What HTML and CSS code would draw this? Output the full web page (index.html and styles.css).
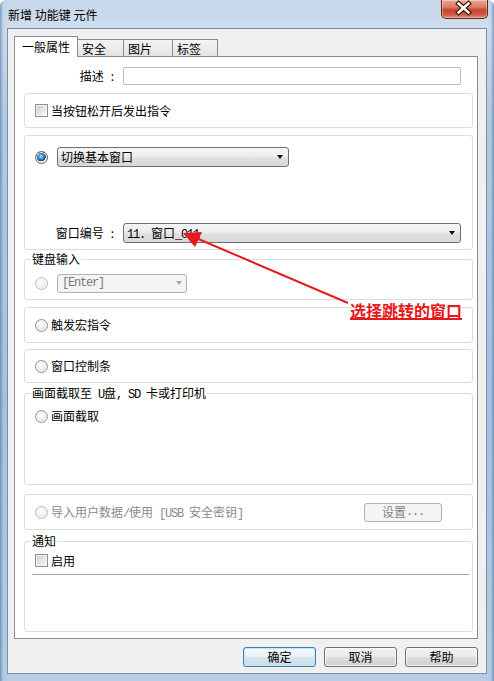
FILE: index.html
```html
<!DOCTYPE html>
<html lang="zh-CN">
<head>
<meta charset="utf-8">
<title>新增 功能键 元件</title>
<link rel="stylesheet" href="styles.css">
</head>
<body>
<div class="window">
  <div class="titlebar">
    <span class="title">新增 功能键 元件</span>
    <div class="close">
      <svg width="47" height="19" viewBox="0 0 47 19">
        <path d="M18 4.5 L28 13.5 M28 4.5 L18 13.5" stroke="#3b1209" stroke-width="5" stroke-linecap="square"/>
        <path d="M18 4.5 L28 13.5 M28 4.5 L18 13.5" stroke="#ffffff" stroke-width="2.6" stroke-linecap="square"/>
      </svg>
    </div>
  </div>
  <div class="client">
    <div class="tabs">
      <div class="tab active">一般属性</div>
      <div class="tab t2">安全</div>
      <div class="tab t3">图片</div>
      <div class="tab t4">标签</div>
    </div>
    <div class="panel">
      <div class="desc-row">
        <span class="lbl lbl-desc">描述<span class="colon">:</span></span>
        <div class="textbox"></div>
      </div>

      <div class="group g1">
        <span class="checkbox"></span><span class="opt">当按钮松开后发出指令</span>
      </div>

      <div class="group g2">
        <div class="row">
          <span class="radio on"></span>
          <div class="combo combo-main"><span class="ctext">切换基本窗口</span><span class="arrow"></span></div>
        </div>
        <div class="row row-win">
          <span class="lbl lbl-win">窗口编号<span class="colon">:</span></span>
          <div class="combo combo-win"><span class="ctext"><span class="mono">11. </span>窗口<span class="mono">_011</span></span><span class="arrow"></span></div>
        </div>
      </div>

      <fieldset class="fs fs-kb">
        <legend>键盘输入</legend>
        <div class="fs-body kb-body">
          <span class="radio dis"></span>
          <div class="combo combo-dis"><span class="ctext mono">[Enter]</span><span class="arrow"></span></div>
        </div>
      </fieldset>

      <div class="group g-macro">
        <span class="radio"></span><span class="opt">触发宏指令</span>
      </div>

      <div class="group g-wc">
        <span class="radio"></span><span class="opt">窗口控制条</span>
      </div>

      <fieldset class="fs fs-shot">
        <legend>画面截取至<span class="mono"> U</span>盘<span class="mono">, SD </span>卡或打印机</legend>
        <div class="fs-body shot-body">
          <span class="radio"></span><span class="opt">画面截取</span>
        </div>
      </fieldset>

      <div class="group g-usb">
        <span class="radio dis"></span><span class="opt dis-text">导入用户数据<span class="mono">/</span>使用<span class="mono"> [USB </span>安全密钥<span class="mono">]</span></span>
        <div class="btn btn-dis">设置<span class="mono">...</span></div>
      </div>

      <fieldset class="fs fs-notify">
        <legend>通知</legend>
        <div class="fs-body notify-body">
          <div class="check-row"><span class="checkbox"></span><span class="opt">启用</span></div>
          <div class="hline"></div>
        </div>
      </fieldset>
    </div>
    <div class="buttons">
      <div class="btn btn-default">确定</div>
      <div class="btn">取消</div>
      <div class="btn">帮助</div>
    </div>
  </div>

  <svg class="annot" width="494" height="681" viewBox="0 0 494 681">
    <line x1="348" y1="303" x2="196" y2="238" stroke="#e8191c" stroke-width="2"/>
    <polygon points="183,233 202,232 195,247" fill="#e8191c"/>
  </svg>
  <div class="annot-text">选择跳转的窗口</div>
</div>
</body>
</html>
```

FILE: styles.css
```css
* { box-sizing: border-box; }
html, body { margin: 0; padding: 0; }
body {
  width: 494px;
  height: 681px;
  overflow: hidden;
  font-family: "Noto Sans CJK SC", "Noto Sans", sans-serif;
  font-size: 12px;
  line-height: 14px;
  color: #000;
}
.mono {
  font-family: "Liberation Mono", "DejaVu Sans Mono", monospace;
  font-size: 12px;
  line-height: 10px;
  letter-spacing: -1.2px;
  white-space: pre;
}

.window {
  position: relative;
  width: 494px;
  height: 681px;
  display: flex;
  flex-direction: column;
  border-radius: 6px 6px 0 0;
  background:
    linear-gradient(90deg, rgba(60,100,150,0.55) 0, rgba(150,185,220,0.2) 3px, rgba(0,0,0,0) 7px, rgba(0,0,0,0) 487px, rgba(150,185,220,0.2) 491px, rgba(60,100,150,0.55) 494px),
    linear-gradient(180deg, #c5d6ea 0, #cfdeef 28px, #b4cae3 120px, #a8c1de 400px, #b7cce5 681px);
}

.titlebar {
  height: 28px;
  display: flex;
  align-items: flex-start;
  flex-shrink: 0;
}
.title {
  margin: 8px 0 0 8px;
  font-size: 12px;
  line-height: 14px;
  color: #000;
}
.close {
  margin-left: auto;
  margin-right: 6px;
  width: 47px;
  height: 19px;
  border: 1px solid #6b2418;
  border-top: none;
  border-radius: 0 0 5px 5px;
  background: linear-gradient(180deg, #eaa998 0, #dc7a62 40%, #c7432b 55%, #cf5a40 80%, #e08b70 100%);
  box-shadow: inset 0 0 0 1px rgba(255,255,255,0.35);
  display: flex;
}
.close svg { display: block; margin: -1px 0 0 -1px; }

.client {
  margin: 0 7px 7px 7px;
  height: 646px;
  border: 1px solid #7d8ea3;
  background: #f0f0f0;
  padding: 7px 8px 0 6px;
  display: flex;
  flex-direction: column;
}

.tabs {
  height: 20px;
  display: flex;
  align-items: flex-end;
  position: relative;
  z-index: 1;
}
.tab {
  height: 17px;
  border: 1px solid #898c95;
  border-bottom: none;
  margin-left: -1px;
  padding: 2px 0 0 4px;
  background: linear-gradient(180deg, #f5f5f5 0, #ececec 50%, #e2e2e2 100%);
  line-height: 14px;
}
.tab.active {
  height: 21px;
  width: 64px;
  margin-left: 0;
  margin-bottom: -1px;
  padding: 3px 0 0 7px;
  background: #fff;
  position: relative;
  z-index: 2;
}
.t2 { width: 47px; }
.t3 { width: 50px; }
.t4 { width: 46px; }

.panel {
  width: 464px;
  height: 583px;
  border: 1px solid #898c95;
  background: #fff;
  padding: 0 4px 0 9px;
  display: flex;
  flex-direction: column;
}

.lbl { text-align: right; flex-shrink: 0; }
.colon { margin-left: 7px; }
.lbl-desc { width: 99px; }
.lbl-win { width: 79px; }

.desc-row {
  margin-top: 10px;
  height: 18px;
  display: flex;
  align-items: center;
  margin-left: -9px;
}
.textbox {
  margin-left: 9px;
  width: 338px;
  height: 18px;
  border: 1px solid #b7bcc2;
  border-radius: 2px;
  background: #fff;
}

.group {
  border: 1px solid #d5dfe5;
  border-radius: 3px;
  display: flex;
  align-items: center;
  padding-left: 10px;
}
.g1 { margin-top: 8px; height: 35px; }
.g2 {
  margin-top: 7px;
  height: 115px;
  flex-direction: column;
  align-items: stretch;
  padding-top: 11px;
}
.row { display: flex; align-items: center; height: 20px; }
.row-win { margin-top: 56px; }
.g-macro { margin-top: 7px; height: 36px; }
.g-wc { margin-top: 6px; height: 34px; }
.g-usb { margin-top: 9px; height: 36px; }

.fs {
  margin: 0;
  padding: 0;
  min-width: 0;
  border: 1px solid #d5dfe5;
  border-radius: 3px;
}
.fs legend {
  margin-left: 6px;
  padding: 0 1px;
  height: 14px;
  line-height: 14px;
  font-size: 12px;
  white-space: nowrap;
}
.fs-body { padding-left: 10px; }
.fs-kb { margin-top: 2px; }
.kb-body {
  display: flex;
  align-items: center;
  height: 20px;
  margin: 7px 0 6px 0;
}
.fs-shot { margin-top: 3px; }
.shot-body {
  display: flex;
  align-items: center;
  height: 14px;
  margin: 9px 0 61px 0;
}
.fs-notify { margin-top: 4px; }
.notify-body { padding-top: 6px; padding-bottom: 56px; }
.check-row { display: flex; align-items: center; height: 13px; }
.hline {
  margin: 7px 3px 0 -3px;
  height: 1px;
  background: #a0a0a0;
}

.opt { margin-left: 3px; white-space: nowrap; }
.dis-text { color: #8a8a8a; }

.checkbox {
  width: 13px;
  height: 13px;
  flex-shrink: 0;
  border: 1px solid #8e8f8f;
  background: linear-gradient(135deg, #c6cad0 0, #e4e6e8 55%, #fbfbfb 100%);
  box-shadow: inset 0 0 0 1px #f4f4f4;
}

.radio {
  width: 13px;
  height: 13px;
  flex-shrink: 0;
  border-radius: 50%;
  border: 1px solid #8f9294;
  background: radial-gradient(circle at 45% 40%, #ffffff 0, #ececec 45%, #c6c6c6 100%);
  box-shadow: inset 0 0 0 1px #f6f6f6;
}
.radio.on {
  border-color: #5f6366;
  background:
    radial-gradient(circle at 45% 40%, #a6e3fb 0, #3a98d8 28%, #1b5aa0 45%, #0f3566 52%, rgba(0,0,0,0) 56%),
    radial-gradient(circle at 45% 40%, #ffffff 0, #e9e9e9 50%, #c4c4c4 100%);
}
.radio.dis {
  border-color: #b9bcbe;
  background: radial-gradient(circle at 45% 40%, #ffffff 0, #f0f0f0 50%, #dcdcdc 100%);
}

.combo {
  display: flex;
  align-items: center;
  height: 20px;
  border: 1px solid #707070;
  border-radius: 3px;
  background: linear-gradient(180deg, #f5f5f5 0, #ededed 45%, #e0e0e0 55%, #d8d8d8 100%);
  padding-left: 3px;
  flex-shrink: 0;
}
.ctext { white-space: pre; }
.arrow {
  margin-left: auto;
  margin-right: 5px;
  width: 0;
  height: 0;
  border-left: 3.5px solid transparent;
  border-right: 3.5px solid transparent;
  border-top: 4px solid #111;
}
.combo-main { margin-left: 9px; width: 232px; }
.combo-win { margin-left: 9px; width: 338px; }
.combo-dis {
  margin-left: 9px;
  width: 130px;
  height: 19px;
  border-color: #adb2b5;
  background: #f4f4f4;
  color: #7a7a7a;
  padding-left: 4px;
}
.combo-dis .arrow { border-top-color: #a6a6a6; margin-right: 4px; }

.btn {
  width: 73px;
  height: 20px;
  border: 1px solid #707070;
  border-radius: 3px;
  background: linear-gradient(180deg, #f2f2f2 0, #ebebeb 50%, #dddddd 50%, #cfcfcf 100%);
  box-shadow: inset 0 0 0 1px rgba(255,255,255,0.7);
  display: flex;
  align-items: center;
  justify-content: center;
  line-height: 14px;
}
.btn-default {
  border-color: #3c7fb1;
  background: linear-gradient(180deg, #f3f8fb 0, #e9f1f6 50%, #dae6ee 50%, #cddce6 100%);
  box-shadow: inset 0 0 0 1px #c5e6f8;
}
.btn-dis {
  margin-left: auto;
  margin-right: 30px;
  width: 78px;
  height: 19px;
  border-color: #adb2b5;
  background: #f4f4f4;
  box-shadow: none;
  color: #838383;
}

.buttons {
  margin-top: 8px;
  display: flex;
  justify-content: flex-end;
  gap: 8px;
}

.annot {
  position: absolute;
  left: 0;
  top: 0;
  pointer-events: none;
  z-index: 5;
}
.annot-text {
  position: absolute;
  left: 350px;
  top: 302px;
  z-index: 6;
  font-size: 16px;
  line-height: 17px;
  font-weight: bold;
  color: #e8191c;
  text-decoration: underline;
  text-decoration-thickness: 2px;
  text-underline-offset: 1px;
  white-space: nowrap;
}
```
